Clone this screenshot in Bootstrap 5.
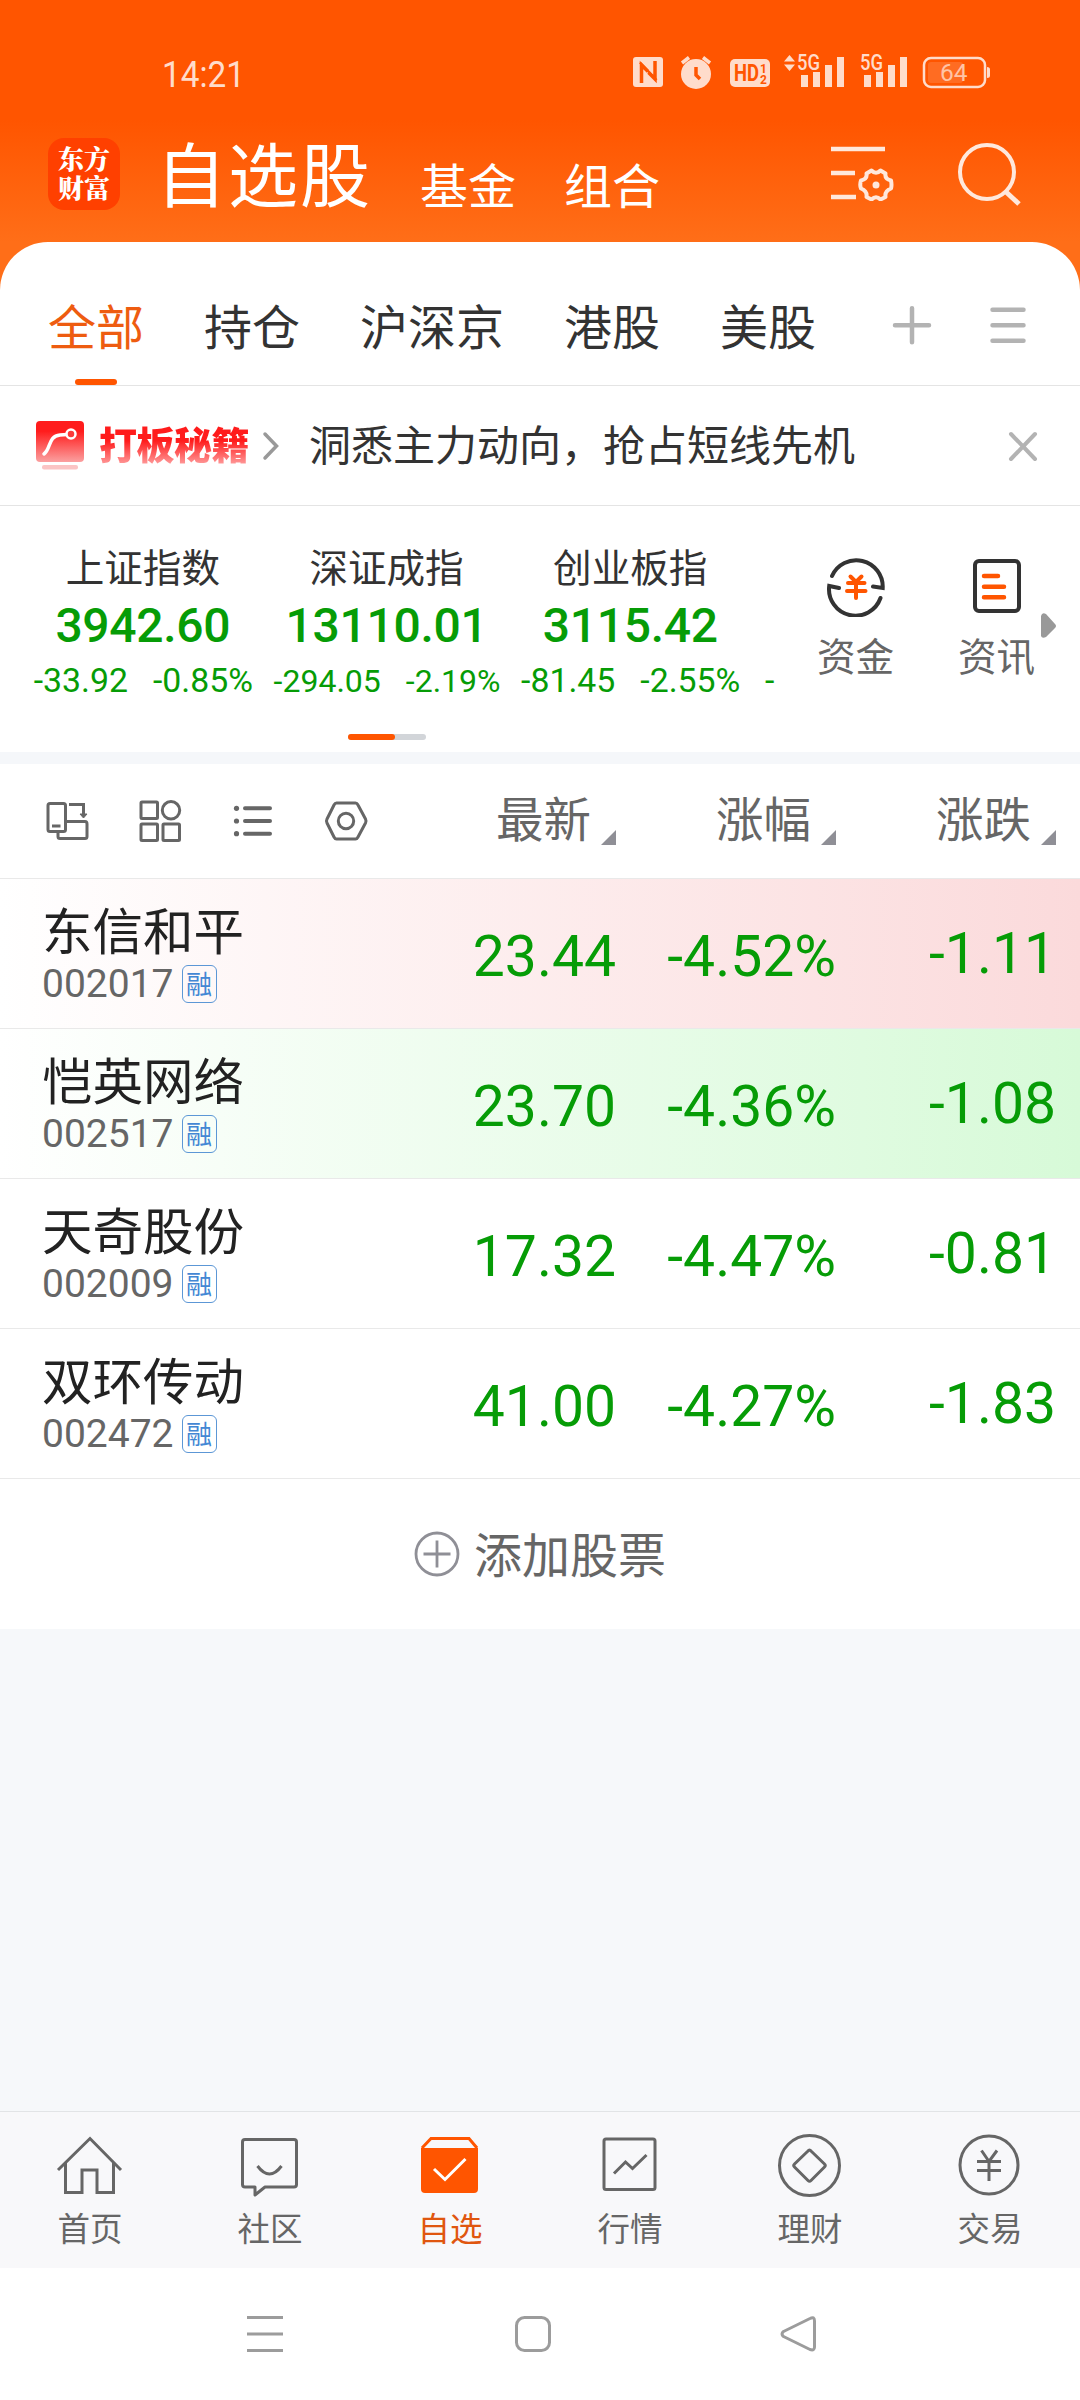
<!DOCTYPE html>
<html lang="zh-CN">
<head>
<meta charset="utf-8">
<meta name="viewport" content="width=device-width, initial-scale=1">
<title>自选股</title>
<link href="https://cdn.jsdelivr.net/npm/bootstrap@5.3.0/dist/css/bootstrap.min.css" rel="stylesheet">
<style>
body{font-family:"Noto Sans CJK SC",sans-serif;color:#333;background:#f6f8fa;line-height:1;-webkit-font-smoothing:antialiased}
svg{display:block;flex:none}
.screen{width:1080px;height:2400px;overflow:hidden}
.num{font-family:Roboto,sans-serif}
.hero{height:290px;background:linear-gradient(#ff5500 0,#ff5500 120px,#ff6e18 242px)}
.statusbar{height:122px}
.titlebar{height:120px;padding:0 58px 0 48px}
.logo{width:72px;height:72px;border-radius:16px;background:#ff4000;font:900 26px/29px "Noto Serif CJK SC","Noto Sans CJK SC",sans-serif;margin-top:-16px;padding-bottom:4px}
.title-main{font-size:70px;letter-spacing:2px;margin:-21px 0 0 36px}
.title-sub{font-size:48px;margin-top:1px}
.sub-a{margin-left:48px}
.sub-b{margin-left:48px}
.sheet{margin-top:-48px;border-radius:48px 48px 0 0;background:#fff}
.tabs{height:144px;border-bottom:1px solid #e4e4e4;padding-left:48px;font-size:48px}
.tabs .tab{height:143px;padding-top:58px}
.tabs .tab+.tab{margin-left:60px}
.tabs .on{color:#ee5c10}
.tabs .on:after{content:"";display:block;width:42px;height:6px;border-radius:3px;background:#ff5500;margin:31px auto 0}
.promo{height:120px;border-bottom:1px solid #e4e4e4;padding-left:36px}
.promo-tag{font-size:38px;font-weight:900;letter-spacing:-.5px;margin:-6px 0 0 15px;background:linear-gradient(#ff1c1c 45%,#f99 98%);-webkit-background-clip:text;background-clip:text;color:transparent;line-height:44px}
.promo-text{font-size:42px;margin-top:-5px}
.indices{height:246px;padding-left:21px}
.quotes{width:766px;overflow:hidden}
.quote{width:243.7px;flex:none;padding-top:39px}
.quote .nm{font-size:38.6px;line-height:40px}
.quote .v{font-size:48px;font-weight:500;letter-spacing:-.3px;line-height:48px;margin-top:17px}
.quote .d{font-size:33.8px;line-height:34px;margin-top:14px;gap:25px;white-space:nowrap;padding-left:1px}
.quote .d.tight{font-size:32px}
.dn{color:#069c06}
.pager{width:78px;height:6px;border-radius:3px;background:#d2d5d9}
.pager div{width:47px;height:6px;border-radius:3px;background:#ff5500}
.tool{font-size:38.6px;color:#666;width:78px;padding-top:49px}
.tool div{margin-top:18px}
.band{height:12px;background:#f5f7fa}
.colhead{height:114px;padding-left:45px;background:#fff;color:#666;font-size:47.5px}
.sortcol{width:220px;padding-right:24px}
.sortcol span{margin:-5px 10px 0 0;padding-bottom:4px}
.sortcol svg{position:relative;top:1px}
.stock{height:150px;border-top:1px solid #e9e9e9;background:#fff;padding:0 24px 0 42px}
.stock.up{background:linear-gradient(90deg,#fff,#fbdadb)}
.stock.down{background:linear-gradient(90deg,#fff,#d7fad8)}
.ident{width:354px}
.stock .nm{font-size:50.5px;line-height:54px;color:#222;margin-top:22px}
.stock .cd{font-size:39px;line-height:40px;color:#666}
.codeline{margin-top:9px}
.tagbox{width:35px;height:38px;border:1.5px solid #5c97d6;border-radius:6px;color:#4387d4;font-size:26px;line-height:33px}
.price{width:220px;font-size:57px;line-height:60px;color:#069c06;text-align:right;margin-top:6px}
.price.last{margin-top:0}
.addrow{height:151px;border-top:1px solid #e9e9e9;background:#fff;color:#666;font-size:48px}
.addrow span{margin:-4px 0 0 14px}
.gapfill{height:482px}
.botnav{height:157px;border-top:1px solid #e2e4e6;background:#f8f8fa;color:#666;font-size:32.5px}
.botnav>div{width:180px;padding-top:18px}
.botnav .lb{margin-top:10px;line-height:34px}
.sysnav{height:132px;background:#fff;padding-left:247px}
</style>
</head>
<body>
<div class="screen">
<header class="hero text-white">
  <div class="statusbar">
    <svg width="1080" height="122" viewBox="0 0 1080 122" fill="#ffdccb">
      <text x="162" y="87" font-family="Roboto" font-size="37.500" textLength="83" lengthAdjust="spacingAndGlyphs">14:21</text>
      <rect x="633" y="57" width="30" height="30" rx="3"/>
      <path d="M641.500 83V65L648 71.500M655 61V79L648.500 72.500" fill="none" stroke="#ff5500" stroke-width="3.500"/><path d="M640 62.500 656.500 80" fill="none" stroke="#ff5500" stroke-width="2.500"/>
      <circle cx="696" cy="74" r="15"/>
      <path d="M682 63 689 57.500M710 63 703 57.500" stroke="#ffdccb" stroke-width="3.500" fill="none"/>
      <path d="M696 67V75L700 79" stroke="#ff5500" stroke-width="3.500" fill="none"/>
      <rect x="730" y="59" width="40" height="28" rx="5"/>
      <g fill="#ff5500" font-family="Roboto" font-weight="700"><text x="734" y="81" font-size="23" textLength="25" lengthAdjust="spacingAndGlyphs">HD</text><text x="760" y="73" font-size="12">1</text><text x="760" y="84" font-size="12">2</text></g>
      <path d="M784 61.500 789.500 55 795 61.500ZM784 64.500H795L789.500 71Z"/>
      <g font-family="Roboto" font-weight="500" font-size="21.500"><text x="797" y="70" textLength="23" lengthAdjust="spacingAndGlyphs">5G</text><text x="860" y="70" textLength="23" lengthAdjust="spacingAndGlyphs">5G</text></g>
      <path d="M801 75h7v12h-7zM813 72h7v15h-7zM825 65h7v22h-7zM837 57h7v30h-7zM864 75h7v12h-7zM876 72h7v15h-7zM888 65h7v22h-7zM900 57h7v30h-7z"/>
      <rect x="928" y="62" width="35" height="21" rx="3" fill="#ff6c22"/>
      <rect x="924" y="58" width="61" height="29" rx="7" fill="none" stroke="#ffdccb" stroke-width="2.500"/>
      <path d="M987 67q3 0 3 2.500v6q0 2.500-3 2.500z"/>
      <text x="940" y="81" font-family="Roboto" font-size="24.500" fill="#ffc4a6">64</text>
    </svg>
  </div>
  <div class="titlebar d-flex align-items-center">
    <div class="logo d-flex flex-column justify-content-center text-center"><span>东方</span><span>财富</span></div>
    <div class="title-main">自选股</div>
    <div class="title-sub sub-a">基金</div>
    <div class="title-sub sub-b">组合</div>
    <div class="d-flex ms-auto" style="margin-top:-16px">
      <svg width="66" height="60" viewBox="829 142 66 60" fill="none" stroke="#ffe8dc" stroke-width="4.500">
        <path d="M831 150H885M831 174H855M831 198H856"/>
        <path stroke-linejoin="round" stroke-width="4" d="M871.500 171.500 Q876 176 880.500 171.500 L885.500 174.500 Q884.500 180 891 181.500 Q892 186 891 189.500 Q884.500 192 885.500 198 L880.500 200.500 Q876 196 871.500 200.500 L866.500 198 Q867.500 192 861 189.500 Q859.500 186 861 181.500 Q867.500 180 866.500 174.500Z"/>
        <circle cx="876" cy="186" r="3.500" fill="#ffe8dc" stroke="none"/>
      </svg>
      <svg style="margin-left:61px" width="66" height="66" viewBox="956 140 66 66" fill="none" stroke="#ffe8dc" stroke-width="4"><circle cx="987" cy="171" r="27"/><path d="M1005 190 1019 203" stroke-width="5"/></svg>
    </div>
  </div>
</header>
<main class="sheet">
  <div class="tabs d-flex">
    <div class="tab on">全部</div>
    <div class="tab">持仓</div>
    <div class="tab">沪深京</div>
    <div class="tab">港股</div>
    <div class="tab">美股</div>
    <svg style="margin:61px 0 0 72px" width="140" height="44" viewBox="888 303 140 44" stroke="#b3b3b3" stroke-width="4.500" stroke-linecap="round"><path d="M895 325.300H929M912 308.300V342.300M992.500 309.700H1023.500M992.500 325.300H1023.500M992.500 340.700H1023.500"/></svg>
  </div>
  <div class="promo d-flex align-items-center">
    <svg width="48" height="50" viewBox="0 0 48 50"><defs><linearGradient id="pg" x2="0" y2="1"><stop offset=".25" stop-color="#ff1c1c"/><stop offset="1" stop-color="#fba0a0"/></linearGradient></defs><rect width="48" height="41" rx="4" fill="url(#pg)"/><path d="M8 33C15 28 12 15 24 14L31 13.500" fill="none" stroke="#fff" stroke-width="3.500" stroke-linecap="round"/><circle cx="35" cy="13" r="4.500" fill="#fb3a3a" stroke="#fff" stroke-width="2.500"/><rect x="6" y="44" width="36" height="4.500" rx="2" fill="#fbc4c4"/></svg>
    <div class="promo-tag">打板秘籍</div>
    <svg style="margin:0 29px 0 13px" width="18" height="30" viewBox="0 0 18 30" fill="none" stroke="#999" stroke-width="3.500" stroke-linecap="round"><path d="M3 3 14.500 15 3 27"/></svg>
    <div class="promo-text">洞悉主力动向，抢占短线先机</div>
    <svg style="margin-left:152px" width="32" height="32" viewBox="0 0 32 32" stroke="#b3b3b3" stroke-width="4" stroke-linecap="round"><path d="M4 4 28 29M28 4 4 29"/></svg>
  </div>
  <div class="indices">
    <div class="d-flex" style="height:228px">
    <div class="quotes d-flex">
      <div class="quote text-center"><div class="nm">上证指数</div><div class="v num dn">3942.60</div><div class="d num dn d-flex justify-content-center"><span>-33.92</span><span>-0.85%</span></div></div>
      <div class="quote text-center"><div class="nm">深证成指</div><div class="v num dn">13110.01</div><div class="d tight num dn d-flex justify-content-center"><span>-294.05</span><span>-2.19%</span></div></div>
      <div class="quote text-center"><div class="nm">创业板指</div><div class="v num dn">3115.42</div><div class="d num dn d-flex justify-content-center"><span>-81.45</span><span>-2.55%</span></div></div>
      <div class="quote"><div class="nm">&nbsp;</div><div class="v num">&nbsp;</div><div class="d num dn" style="padding-left:13px">-</div></div>
    </div>
    <div class="tool" style="margin-left:30px">
      <svg class="mx-auto" width="62" height="62" viewBox="825 556 62 62" fill="none" stroke="#333" stroke-width="4"><path d="M832 577A26.500 26.500 0 0 1 882.700 589L873 587.500M880.500 599A26.500 26.500 0 0 1 829.200 587L839 589" stroke-linecap="round"/><path d="M850.500 577.500 856 583 861.500 577.500M848 584H864.500M847 592H865.500M856 584V599" stroke="#ff5500" stroke-linecap="round"/></svg>
      <div>资金</div>
    </div>
    <div class="tool" style="margin-left:63px">
      <svg class="mx-auto" width="62" height="62" viewBox="966 556 62 62" fill="none" stroke="#333" stroke-width="4"><rect x="975" y="562" width="44" height="50" rx="4"/><path d="M984 577H998M984 587.700H1004M984 598.300H1004" stroke="#ff5500" stroke-width="4.500" stroke-linecap="round"/></svg>
      <div>资讯</div>
    </div>
    <svg style="margin:107px 0 0 5px" width="16" height="26" viewBox="0 0 16 26" fill="#999"><path d="M0 3Q1-1 5 1L14 11Q16 13 14 15L5 24Q1 26 0 23Z"/></svg>
    </div>
    <div class="pager" style="margin-left:327px"><div></div></div>
  </div>
</main>
<div class="band"></div>
<section>
  <div class="colhead d-flex align-items-center">
    <svg width="324" height="44" viewBox="45 799 324 44" fill="none" stroke="#666" stroke-width="3">
      <rect x="48" y="803.500" width="17.500" height="28" rx="2"/><path d="M52 826H60.500M69 804.500H83.500V816M65.500 821.500H85Q87 821.500 87 824V836.500Q87 838.500 85 838.500H60Q58 838.500 58 836.500V832"/><path d="M80 814H87L83.500 818Z" fill="#666" stroke-width="1"/>
      <rect x="141" y="802" width="16.500" height="16.500" rx="1"/><circle cx="171" cy="810.300" r="8.700"/><rect x="141" y="824" width="16.500" height="16.500" rx="1"/><rect x="163" y="824" width="16.500" height="16.500" rx="1"/>
      <path d="M245 808.300H270M245 821H270M245 833.700H270" stroke-width="4" stroke-linecap="round"/><g fill="#666" stroke="none"><circle cx="236.500" cy="808.300" r="2.600"/><circle cx="236.500" cy="821" r="2.600"/><circle cx="236.500" cy="833.700" r="2.600"/></g>
      <path stroke-linejoin="round" d="M336.500 803H355.500Q357 803 358 805L365.500 819Q366.500 821 365.500 823L358 837Q357 839 355.500 839H336.500Q335 839 334 837L327 823Q326 821 327 819L334 805Q335 803 336.500 803Z"/><circle cx="346" cy="821" r="7.700"/>
    </svg>
    <div class="d-flex ms-auto">
      <div class="sortcol d-flex justify-content-end align-items-end"><span>最新</span><svg width="15" height="15" viewBox="0 0 15 15"><path d="M15 0V15H0Z" fill="#8f8f96"/></svg></div>
      <div class="sortcol d-flex justify-content-end align-items-end"><span>涨幅</span><svg width="15" height="15" viewBox="0 0 15 15"><path d="M15 0V15H0Z" fill="#8f8f96"/></svg></div>
      <div class="sortcol d-flex justify-content-end align-items-end"><span>涨跌</span><svg width="15" height="15" viewBox="0 0 15 15"><path d="M15 0V15H0Z" fill="#8f8f96"/></svg></div>
    </div>
  </div>
  <div class="stock up d-flex align-items-center">
    <div class="ident align-self-start"><div class="nm">东信和平</div><div class="codeline d-flex align-items-center"><span class="cd num">002017</span><span class="tagbox text-center ms-2">融</span></div></div>
    <div class="price num">23.44</div><div class="price num">-4.52%</div><div class="price last num">-1.11</div>
  </div>
  <div class="stock down d-flex align-items-center">
    <div class="ident align-self-start"><div class="nm">恺英网络</div><div class="codeline d-flex align-items-center"><span class="cd num">002517</span><span class="tagbox text-center ms-2">融</span></div></div>
    <div class="price num">23.70</div><div class="price num">-4.36%</div><div class="price last num">-1.08</div>
  </div>
  <div class="stock d-flex align-items-center">
    <div class="ident align-self-start"><div class="nm">天奇股份</div><div class="codeline d-flex align-items-center"><span class="cd num">002009</span><span class="tagbox text-center ms-2">融</span></div></div>
    <div class="price num">17.32</div><div class="price num">-4.47%</div><div class="price last num">-0.81</div>
  </div>
  <div class="stock d-flex align-items-center">
    <div class="ident align-self-start"><div class="nm">双环传动</div><div class="codeline d-flex align-items-center"><span class="cd num">002472</span><span class="tagbox text-center ms-2">融</span></div></div>
    <div class="price num">41.00</div><div class="price num">-4.27%</div><div class="price last num">-1.83</div>
  </div>
  <div class="addrow d-flex align-items-center justify-content-center">
    <svg width="46" height="46" viewBox="0 0 46 46" fill="none" stroke="#8f8f96" stroke-width="2.800"><circle cx="23" cy="23" r="21"/><path d="M9.500 23H36.500M23 9.500V36.500"/></svg>
    <span>添加股票</span>
  </div>
</section>
<div class="gapfill"></div>
<nav class="botnav d-flex text-center">
  <div><svg class="mx-auto" width="70" height="70" viewBox="55 2130 70 70" fill="none" stroke="#666" stroke-width="3"><path d="M58 2170 90 2138.500 121 2170M65.500 2163V2192.500H82V2170H97V2192.500H113.500V2163"/></svg><div class="lb">首页</div></div>
  <div><svg class="mx-auto" width="70" height="70" viewBox="235 2130 70 70" fill="none" stroke="#666" stroke-width="3" stroke-linejoin="round"><path d="M245 2139.500H294Q296.500 2139.500 296.500 2142V2184.500Q296.500 2187 294 2187H265L255 2195V2187H245Q242.500 2187 242.500 2184.500V2142Q242.500 2139.500 245 2139.500ZM257.500 2166Q269.500 2182 281.500 2166"/></svg><div class="lb">社区</div></div>
  <div style="color:#e0560f"><svg class="mx-auto" width="70" height="70" viewBox="415 2130 70 70" fill="none"><path d="M421 2148H478V2189Q478 2193 474 2193H425Q421 2193 421 2189Z" fill="#ff5500"/><path d="M422 2148 431 2138.500H469L477 2148" stroke="#ff5500" stroke-width="3"/><path d="M434 2169 445 2179.500 465.500 2159" stroke="#fff" stroke-width="3"/></svg><div class="lb">自选</div></div>
  <div><svg class="mx-auto" width="70" height="70" viewBox="595 2130 70 70" fill="none" stroke="#666" stroke-width="3"><rect x="604" y="2139" width="51" height="50.500" rx="2"/><path d="M614 2173.500 625.500 2162 632.500 2168.500 646.500 2155"/></svg><div class="lb">行情</div></div>
  <div><svg class="mx-auto" width="70" height="70" viewBox="775 2130 70 70" fill="none" stroke="#666" stroke-width="3"><circle cx="809.500" cy="2165.500" r="30"/><path stroke-linejoin="round" d="M808 2151Q809.500 2149 811 2151L824.500 2164Q826 2165.500 824.500 2167L811 2180.500Q809.500 2182 808 2180.500L794.500 2167Q793 2165.500 794.500 2164Z"/></svg><div class="lb">理财</div></div>
  <div><svg class="mx-auto" width="70" height="70" viewBox="955 2130 70 70" fill="none" stroke="#666" stroke-width="3"><circle cx="989" cy="2165" r="29"/><path d="M981.500 2150.500 989 2161.500 997 2150.500M977 2161.500H1001M977 2170.500H1001M989 2161.500V2181"/></svg><div class="lb">交易</div></div>
</nav>
<div class="sysnav">
  <svg width="600" height="132" viewBox="247 2268 600 132" fill="none" stroke="#9c9c9c" stroke-width="3"><path d="M247 2317.500H283M247 2334H283M247 2350.500H283"/><rect x="516.500" y="2317.500" width="33" height="33" rx="8"/><path stroke-linejoin="round" d="M783.500 2331.500Q780.500 2334 783.500 2336.500L810 2349.500Q814.500 2351 814.500 2347V2321Q814.500 2316 810 2318.500Z"/></svg>
</div>
</div>
<script src="https://cdn.jsdelivr.net/npm/bootstrap@5.3.0/dist/js/bootstrap.bundle.min.js"></script>
</body>
</html>
